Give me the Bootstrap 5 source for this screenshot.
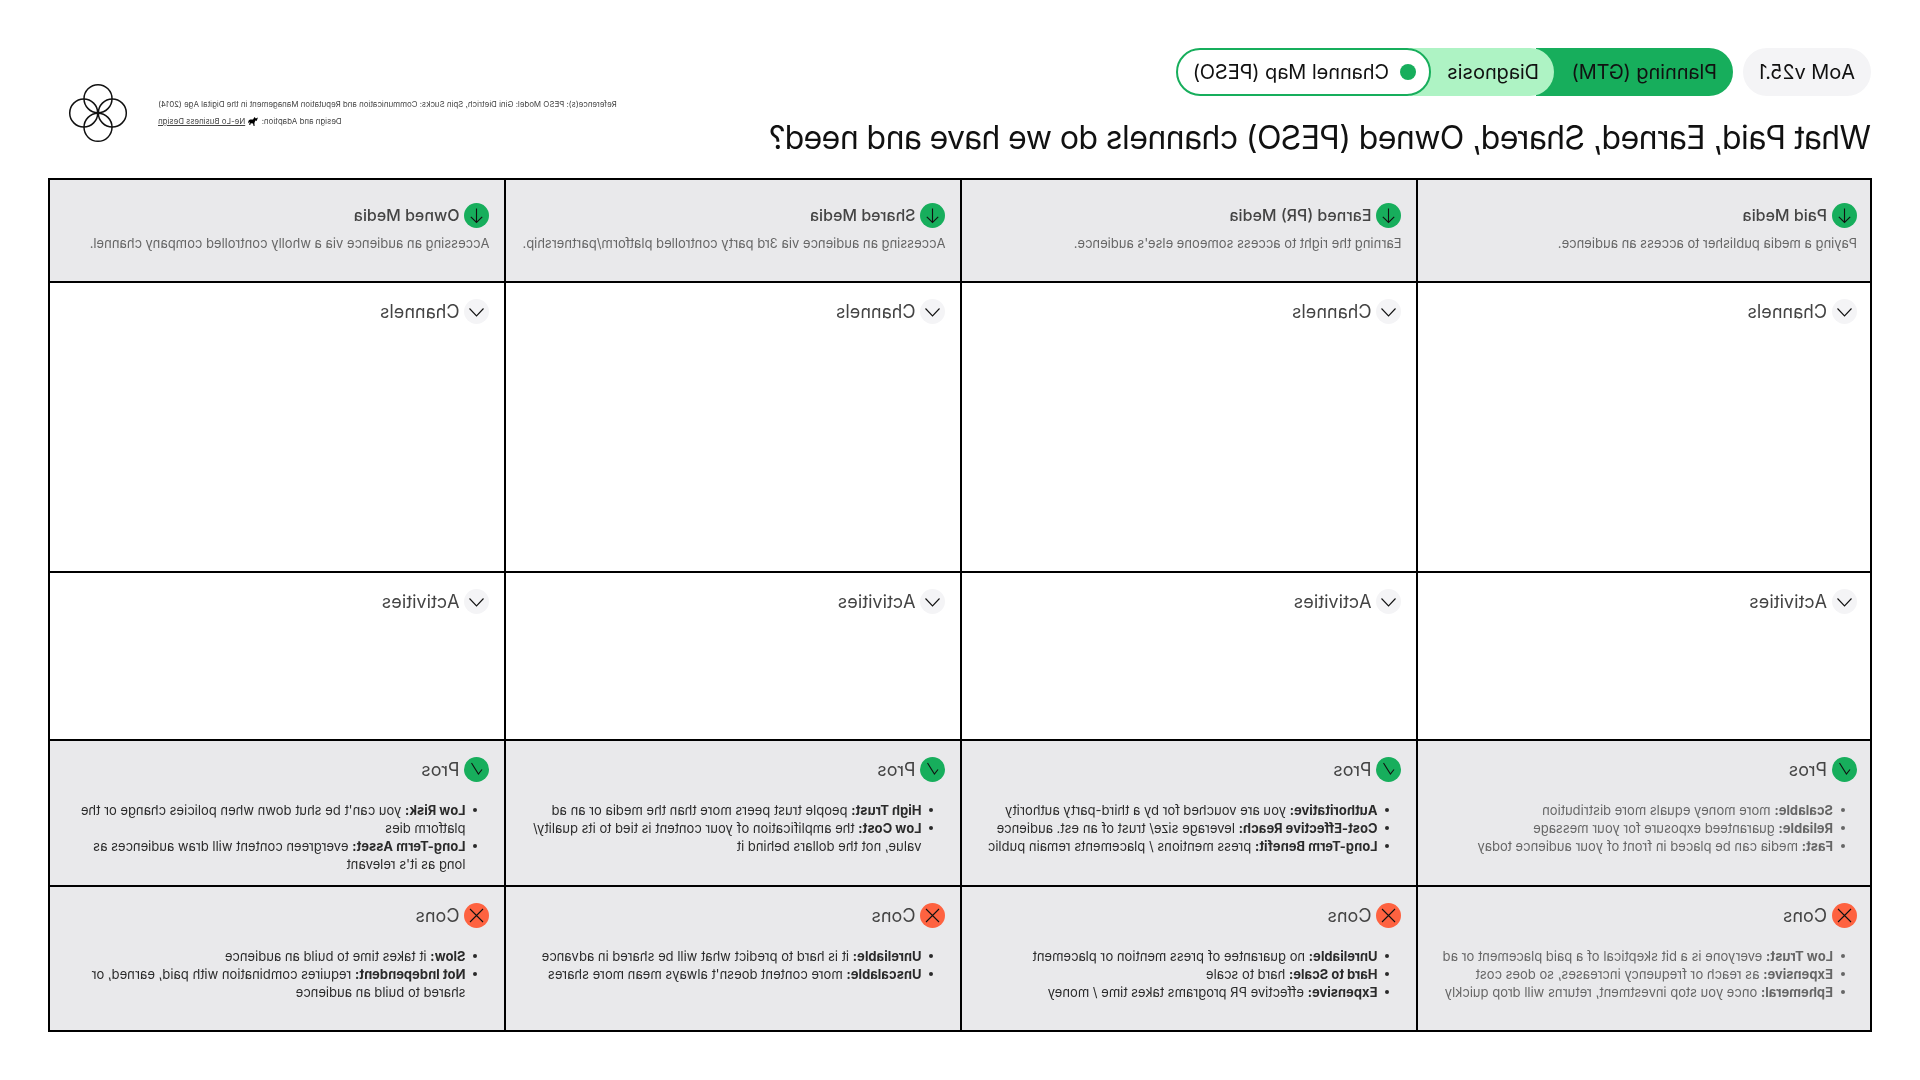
<!DOCTYPE html>
<html lang="en"><head><meta charset="utf-8"><title>PESO Channel Map</title>
<link href="https://cdn.jsdelivr.net/npm/bootstrap@5.3.0/dist/css/bootstrap.min.css" rel="stylesheet">
<style>
html,body{margin:0;background:#fff;overflow:hidden}
body{font-family:Inter,"Liberation Sans",sans-serif;color:#111}
.flip-page{width:1920px;height:1080px;transform:scaleX(-1);padding:48px 48px 0}
.top-band{height:130px}
.step{height:48px;font-size:20px;letter-spacing:-.1px;line-height:48px;white-space:nowrap;border-radius:24px;position:relative}
.step-ver{width:128px;background:#f4f4f6;text-align:center;margin-left:1px;margin-right:10px}
.step-a{width:197px;padding-left:16px;background:#17ae5c;z-index:1;border-radius:24px 0 0 24px}
.step-b{width:144px;margin-left:-18px;padding-left:15px;background:#aef3c4;z-index:2;border-radius:24px 0 0 24px}
.step-c{width:255px;margin-left:-21px;padding-left:13px;gap:11px;background:#fff;border:2px solid #17ae5c;z-index:3;line-height:44px}
.step-dot{width:16px;height:16px;border-radius:50%;background:#17ae5c;flex:none}
.page-title{font-size:32px;letter-spacing:-.58px;line-height:40px;font-weight:400;margin:22px 0 0 1px;white-space:nowrap}
.ref-block{margin-top:35px;margin-right:20px;gap:30px}
.ref-text{font-size:7.9px;line-height:17px;color:#444;text-align:right;padding-top:13px;white-space:nowrap}
.ref-text a{color:#444}
.ref-text svg{vertical-align:-2px;margin:0 1px}
.peso-grid{display:grid;background:#000;gap:2px;padding:2px;width:1824px;height:854px;
 grid-template-columns:452px 454px 454px 1fr;grid-template-rows:101px 288px 166px 144px 143px}
.pcell{background:#fff;padding:15.5px 14px 0 13px}
.pcell:not(:nth-child(4n+1)){padding-left:14.5px}
.tone{background:#e9e9eb}
.pcell.head{padding-top:23px}
.chip{width:25px;height:25px;border-radius:50%;flex:none;background:#f4f4f6}
.chip.go{background:#17ae5c}.chip.stop{background:#fe6240}
.chip svg{display:block;width:25px;height:25px;fill:none;stroke:#111;stroke-width:1.1}
.hd{gap:5px;font-size:18px;line-height:25px;color:#444}
.head .hd{font-weight:500;font-size:16px}
.desc{font-size:13px;line-height:18px;color:#666;margin:6px 0 0}
.plist{font-size:13px;line-height:18px;color:#2a2a2a;margin:19.5px 0 0;padding-left:24px;list-style:none}
.plist li{position:relative}
.plist li::before{content:"";position:absolute;left:-12px;top:7px;width:4px;height:4px;border-radius:50%;background:currentColor}
.plist.soft{color:#666}
.plist strong{font-weight:700}
</style></head><body>
<svg width="0" height="0" style="position:absolute"><defs>
<symbol id="i-down" viewBox="0 0 25 25"><path d="M12.5 5.5v14M6.8 13.8l5.7 5.7 5.7-5.7"/></symbol>
<symbol id="i-chev" viewBox="0 0 25 25"><path d="M5.5 9.5l7 7.5 7-7.5"/></symbol>
<symbol id="i-check" viewBox="0 0 25 25"><path d="M7 12.5l3.6 4.6L17.5 6"/></symbol>
<symbol id="i-x" viewBox="0 0 25 25"><path d="M6 6l13 13M19 6L6 19"/></symbol>
</defs></svg>
<div class="flip-page">
 <div class="top-band d-flex justify-content-between align-items-start">
  <div>
   <div class="d-flex">
    <div class="step step-ver">AoM v25.1</div>
    <div class="step step-a">Planning (GTM)</div>
    <div class="step step-b">Diagnosis</div>
    <div class="step step-c d-flex align-items-center"><span class="step-dot"></span>Channel Map (PESO)</div>
   </div>
   <h1 class="page-title">What Paid, Earned, Shared, Owned (PESO) channels do we have and need?</h1>
  </div>
  <div class="ref-block d-flex align-items-start">
   <div class="ref-text">
    <div>Reference(s): PESO Model: Gini Dietrich, Spin Sucks: Communication and Reputation Management in the Digital Age (2014)</div>
    <div>Design and Adaption: <svg width="10" height="10" viewBox="0 0 10 10"><path fill="#000" d="M0 1.5l2.2 1L3.5 1l.6 1 .9 1.4 3 .2 1.5 1.2.5 2.5-.8-.6-.2-1-.6.6.4 2.7h-1L7.2 7.3 5 7.4 4.4 10h-1l.2-3L2.7 4.6 1.4 4.9 1 4z"/></svg> <a href="#">Ne-Lo Business Design</a></div>
   </div>
   <svg width="60" height="60" viewBox="0 0 60 60" fill="none" stroke="#111" stroke-width="1.5"><circle cx="30" cy="15.7" r="14"/><circle cx="30" cy="44.3" r="14"/><circle cx="15.7" cy="30" r="14"/><circle cx="44.3" cy="30" r="14"/></svg>
  </div>
 </div>
 <div class="peso-grid">
  <div class="pcell tone head"><div class="hd d-flex align-items-center"><span class="chip go"><svg><use href="#i-down"/></svg></span>Paid Media</div><p class="desc">Paying a media publisher to access an audience.</p></div>
  <div class="pcell tone head"><div class="hd d-flex align-items-center"><span class="chip go"><svg><use href="#i-down"/></svg></span>Earned (PR) Media</div><p class="desc">Earning the right to access someone else's audience.</p></div>
  <div class="pcell tone head"><div class="hd d-flex align-items-center"><span class="chip go"><svg><use href="#i-down"/></svg></span>Shared Media</div><p class="desc">Accessing an audience via 3rd party controlled platform/partnership.</p></div>
  <div class="pcell tone head"><div class="hd d-flex align-items-center"><span class="chip go"><svg><use href="#i-down"/></svg></span>Owned Media</div><p class="desc">Accessing an audience via a wholly controlled company channel.</p></div>

  <div class="pcell"><div class="hd d-flex align-items-center"><span class="chip"><svg><use href="#i-chev"/></svg></span>Channels</div></div>
  <div class="pcell"><div class="hd d-flex align-items-center"><span class="chip"><svg><use href="#i-chev"/></svg></span>Channels</div></div>
  <div class="pcell"><div class="hd d-flex align-items-center"><span class="chip"><svg><use href="#i-chev"/></svg></span>Channels</div></div>
  <div class="pcell"><div class="hd d-flex align-items-center"><span class="chip"><svg><use href="#i-chev"/></svg></span>Channels</div></div>

  <div class="pcell"><div class="hd d-flex align-items-center"><span class="chip"><svg><use href="#i-chev"/></svg></span>Activities</div></div>
  <div class="pcell"><div class="hd d-flex align-items-center"><span class="chip"><svg><use href="#i-chev"/></svg></span>Activities</div></div>
  <div class="pcell"><div class="hd d-flex align-items-center"><span class="chip"><svg><use href="#i-chev"/></svg></span>Activities</div></div>
  <div class="pcell"><div class="hd d-flex align-items-center"><span class="chip"><svg><use href="#i-chev"/></svg></span>Activities</div></div>

  <div class="pcell tone"><div class="hd d-flex align-items-center"><span class="chip go"><svg><use href="#i-check"/></svg></span>Pros</div>
   <ul class="plist soft"><li><strong>Scalable:</strong> more money equals more distribution</li><li><strong>Reliable:</strong> guaranteed exposure for your message</li><li><strong>Fast:</strong> media can be placed in front of your audience today</li></ul></div>
  <div class="pcell tone"><div class="hd d-flex align-items-center"><span class="chip go"><svg><use href="#i-check"/></svg></span>Pros</div>
   <ul class="plist"><li><strong>Authoritative:</strong> you are vouched for by a third-party authority</li><li><strong>Cost-Effective Reach:</strong> leverage size/ trust of an est. audience</li><li><strong>Long-Term Benefit:</strong> press mentions / placements remain public</li></ul></div>
  <div class="pcell tone"><div class="hd d-flex align-items-center"><span class="chip go"><svg><use href="#i-check"/></svg></span>Pros</div>
   <ul class="plist"><li><strong>High Trust:</strong> people trust peers more than the media or an ad</li><li><strong>Low Cost:</strong> the amplification of your content is tied to its quality/ value, not the dollars behind it</li></ul></div>
  <div class="pcell tone"><div class="hd d-flex align-items-center"><span class="chip go"><svg><use href="#i-check"/></svg></span>Pros</div>
   <ul class="plist"><li><strong>Low Risk:</strong> you can't be shut down when policies change or the platform dies</li><li><strong>Long-Term Asset:</strong> evergreen content will draw audiences as long as it's relevant</li></ul></div>

  <div class="pcell tone"><div class="hd d-flex align-items-center"><span class="chip stop"><svg><use href="#i-x"/></svg></span>Cons</div>
   <ul class="plist soft"><li><strong>Low Trust:</strong> everyone is a bit skeptical of a paid placement or ad</li><li><strong>Expensive:</strong> as reach or frequency increases, so does cost</li><li><strong>Ephemeral:</strong> once you stop investment, returns will drop quickly</li></ul></div>
  <div class="pcell tone"><div class="hd d-flex align-items-center"><span class="chip stop"><svg><use href="#i-x"/></svg></span>Cons</div>
   <ul class="plist"><li><strong>Unreliable:</strong> no guarantee of press mention or placement</li><li><strong>Hard to Scale:</strong> hard to scale</li><li><strong>Expensive:</strong> effective PR programs takes time / money</li></ul></div>
  <div class="pcell tone"><div class="hd d-flex align-items-center"><span class="chip stop"><svg><use href="#i-x"/></svg></span>Cons</div>
   <ul class="plist"><li><strong>Unreliable:</strong> it is hard to predict what will be shared in advance</li><li><strong>Unscalable:</strong> more content doesn't always mean more shares</li></ul></div>
  <div class="pcell tone"><div class="hd d-flex align-items-center"><span class="chip stop"><svg><use href="#i-x"/></svg></span>Cons</div>
   <ul class="plist"><li><strong>Slow:</strong> it takes time to build an audience</li><li><strong>Not Independent:</strong> requires combination with paid, earned, or shared to build an audience</li></ul></div>
 </div>
</div>
<script src="https://cdn.jsdelivr.net/npm/bootstrap@5.3.0/dist/js/bootstrap.bundle.min.js"></script>
</body></html>
